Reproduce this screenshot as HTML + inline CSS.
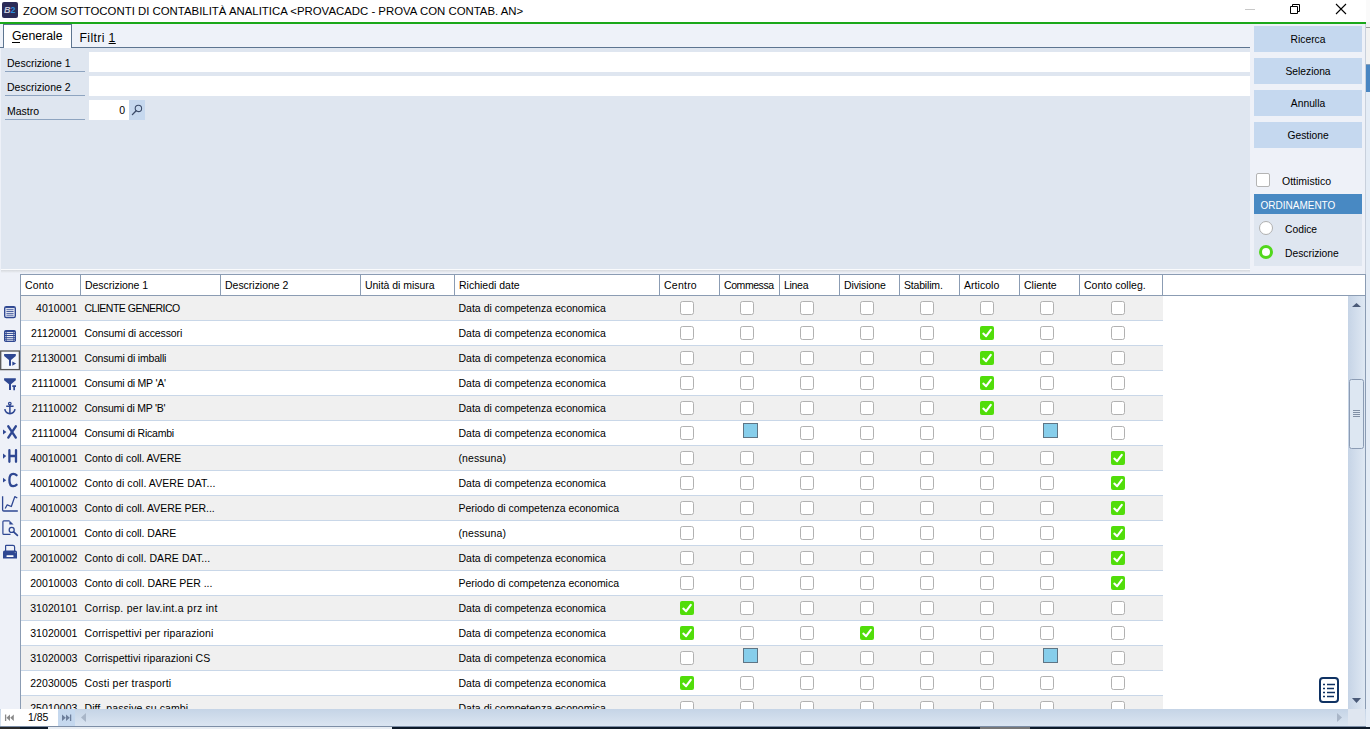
<!DOCTYPE html>
<html><head><meta charset="utf-8"><style>
*{box-sizing:border-box;margin:0;padding:0}
html,body{width:1370px;height:729px;overflow:hidden;background:#eef1f8;font-family:"Liberation Sans",sans-serif;color:#000}
.a{position:absolute}
.title{position:absolute;left:0;top:0;width:1366px;height:22px;background:#fff}
.green{position:absolute;left:0;top:22px;width:1366px;height:2px;background:#1aa81a}
.tabs{position:absolute;left:0;top:24px;width:1250px;height:24px;background:#eef2f9}
.form{position:absolute;left:1px;top:48px;width:1249px;height:221px;background:#dfe6f0}
.lbl{position:absolute;left:5px;width:80px;height:20px;border-bottom:1px solid #8ea4c0;font-size:10.5px;line-height:22px;padding-left:2px}
.inp{position:absolute;left:89px;height:20px;background:#fff}
.btn{position:absolute;left:1254px;width:108px;height:26px;background:#c5d8ef;font-size:10.3px;text-align:center;line-height:28px}
.gh{position:absolute;left:20px;top:274px;width:1346px;height:22px;background:#fff;border:1px solid #8b9cb3;border-right:1px solid #8b9cb3}
.hc{position:absolute;top:275px;height:20px;border-left:1px solid #8b9cb3;font-size:10.5px;line-height:20px;padding-left:4px;white-space:nowrap;overflow:hidden}
.row{position:absolute;left:21px;width:1142px;height:25px;border-bottom:1px solid #c9d7e8}
.cell{position:absolute;height:24px;line-height:24px;font-size:10.5px;white-space:nowrap}
.num{text-align:right}
.cb{position:absolute;width:14px;height:14px;border:1.5px solid #b1b1b1;border-radius:2.5px;background:#fff}
.ck{position:absolute;width:14px;height:14px}
.ck svg{display:block}
.bs{position:absolute;width:15px;height:15px;background:#87ceeb;border:1px solid #5f7585}
.ti{position:absolute;left:0}
</style></head><body>
<div class="title"></div>
<div class="a" style="left:1366px;top:0;width:4px;height:729px;background:#e4ecf6"></div>
<div class="a" style="left:1366px;top:0;width:4px;height:64px;background:#f2f2f2"></div>
<div class="a" style="left:1366px;top:0;width:4px;height:22px;background:#fafafa"></div>
<div class="a" style="left:1366px;top:27px;width:4px;height:1px;background:#9a9a9a"></div>
<div class="a" style="left:1366px;top:64px;width:4px;height:28px;background:#4a86c2;border-top:1px solid #8aa0b8"></div>
<div class="a" style="left:2px;top:2px;width:16px;height:16px;background:#2b2b57;border-radius:2px;font-size:9px;font-style:italic;font-weight:bold;line-height:16px;padding-left:2px;color:#c8c8d8">B<span style="color:#2a8ad8;font-style:normal">2</span></div>
<div class="a" style="left:23px;top:-0.5px;height:22px;line-height:22px;font-size:11.4px;white-space:nowrap;color:#000">ZOOM SOTTOCONTI DI CONTABILITÀ ANALITICA &lt;PROVACADC - PROVA CON CONTAB. AN&gt;</div>
<div class="a" style="left:1245px;top:9px;width:10px;height:1px;background:#c8c8c8"></div>
<svg class="a" style="left:1288px;top:3px" width="14" height="12" viewBox="0 0 14 12"><path d="M2.5 3.5H9.5V10.5H2.5Z" fill="none" stroke="#000" stroke-width="1"/><path d="M4.5 3.5V1.5H11.5V8.5H9.5" fill="none" stroke="#000" stroke-width="1"/></svg>
<svg class="a" style="left:1335px;top:3px" width="12" height="12" viewBox="0 0 12 12"><path d="M1 1L11 11M11 1L1 11" stroke="#000" stroke-width="1.1"/></svg>
<div class="green"></div>
<div class="tabs"></div>
<div class="a" style="left:0;top:47px;width:1250px;height:1px;background:#5d7590"></div>
<div class="a" style="left:3px;top:24px;width:69px;height:24px;background:#fff;border:1px solid #5d7590;border-bottom:none;font-size:12.3px;line-height:22px;padding-left:8px">Generale</div>
<div class="a" style="left:12px;top:42px;width:8px;height:1px;background:#000"></div>
<div class="a" style="left:79.5px;top:26.5px;height:21px;font-size:12.3px;line-height:23px;letter-spacing:0.35px">Filtri <span style="text-decoration:underline">1</span></div>
<div class="form"></div>
<div class="a" style="left:1px;top:269px;width:1249px;height:1px;background:#fafbfd"></div>
<div class="a" style="left:1px;top:270px;width:1249px;height:3px;background:linear-gradient(180deg,#d6d9de,#e4e7ec 60%,#eef1f8)"></div>
<div class="lbl" style="top:52px">Descrizione 1</div>
<div class="lbl" style="top:76px">Descrizione 2</div>
<div class="lbl" style="top:100px">Mastro</div>
<div class="inp" style="top:52px;width:1161px"></div>
<div class="inp" style="top:76px;width:1161px"></div>
<div class="inp" style="top:100px;width:40px;font-size:10.5px;line-height:20px;text-align:right;padding-right:4px">0</div>
<div class="a" style="left:129px;top:100px;width:16px;height:20px;background:#c6d8ee"></div>
<svg class="a" style="left:129px;top:100px" width="16" height="20" viewBox="0 0 16 20"><circle cx="9.4" cy="8.4" r="3.2" fill="none" stroke="#3a4a68" stroke-width="1.05"/><path d="M7.1 10.7L3.4 14.6" stroke="#3a4a68" stroke-width="1.35" stroke-linecap="round"/></svg>
<div class="btn" style="top:26px">Ricerca</div>
<div class="btn" style="top:58px">Seleziona</div>
<div class="btn" style="top:90px">Annulla</div>
<div class="btn" style="top:122px">Gestione</div>
<div class="a" style="left:1256px;top:173px;width:14px;height:14px;border:1px solid #b4b4b4;border-radius:2px;background:#fff"></div>
<div class="a" style="left:1282px;top:171px;height:20px;line-height:20px;font-size:10.5px">Ottimistico</div>
<div class="a" style="left:1254px;top:194px;width:108px;height:20px;background:#4889c3;color:#fff;font-size:10px;line-height:23px;padding-left:6.5px">ORDINAMENTO</div>
<div class="a" style="left:1254px;top:214px;width:108px;height:52px;background:#dfe6f0"></div>
<div class="a" style="left:1259px;top:221px;width:14px;height:14px;border-radius:50%;border:1px solid #b0b0b0;background:#fff"></div>
<div class="a" style="left:1285px;top:220px;height:20px;line-height:20px;font-size:10.3px">Codice</div>
<div class="a" style="left:1259px;top:245px;width:14px;height:14px;border-radius:50%;border:3.6px solid #52d81c;background:#fff"></div>
<div class="a" style="left:1285px;top:244px;height:20px;line-height:20px;font-size:10.3px">Descrizione</div>
<div class="a" style="left:1365px;top:24px;width:1px;height:250px;background:#c8d0dc"></div>
<div class="a" style="left:20px;top:296px;width:1328px;height:413px;background:#fff"></div>
<div class="a" style="left:20px;top:274px;width:1px;height:435px;background:#8b9cb3"></div>
<div class="gh"></div><div class="hc" style="left:20px;width:60px;letter-spacing:0.117px;">Conto</div><div class="hc" style="left:80px;width:140px;letter-spacing:-0.044px;">Descrizione 1</div><div class="hc" style="left:220px;width:140px;letter-spacing:-0.019px;">Descrizione 2</div><div class="hc" style="left:360px;width:94px;letter-spacing:-0.038px;">Unità di misura</div><div class="hc" style="left:454px;width:205px;letter-spacing:-0.000px;">Richiedi date</div><div class="hc" style="left:659px;width:60px;letter-spacing:0.237px;">Centro</div><div class="hc" style="left:719px;width:60px;letter-spacing:-0.430px;">Commessa</div><div class="hc" style="left:779px;width:60px;letter-spacing:-0.301px;">Linea</div><div class="hc" style="left:839px;width:60px;letter-spacing:-0.101px;">Divisione</div><div class="hc" style="left:899px;width:60px;letter-spacing:-0.183px;">Stabilim.</div><div class="hc" style="left:959px;width:60px;letter-spacing:0.041px;">Articolo</div><div class="hc" style="left:1019px;width:60px;letter-spacing:0.002px;">Cliente</div><div class="hc" style="left:1079px;width:83px;letter-spacing:0.034px;">Conto colleg.</div><div class="a" style="left:1162px;top:275px;width:1px;height:20px;background:#8b9cb3"></div><div class="row" style="top:296px;background:#f0f0f0"></div><div class="cell num" style="top:296px;left:20px;width:57.5px;letter-spacing:0.08px">4010001</div><div class="cell" style="top:296px;left:84.5px;letter-spacing:-0.505px;">CLIENTE GENERICO</div><div class="cell" style="top:296px;left:458.5px;letter-spacing:0.011px;">Data di competenza economica</div><div class="cb" style="top:301px;left:680px"></div><div class="cb" style="top:301px;left:740px"></div><div class="cb" style="top:301px;left:800px"></div><div class="cb" style="top:301px;left:860px"></div><div class="cb" style="top:301px;left:920px"></div><div class="cb" style="top:301px;left:980px"></div><div class="cb" style="top:301px;left:1040px"></div><div class="cb" style="top:301px;left:1111px"></div><div class="row" style="top:321px;background:#ffffff"></div><div class="cell num" style="top:321px;left:20px;width:57.5px;letter-spacing:0.08px">21120001</div><div class="cell" style="top:321px;left:84.5px;letter-spacing:-0.105px;">Consumi di accessori</div><div class="cell" style="top:321px;left:458.5px;letter-spacing:0.011px;">Data di competenza economica</div><div class="cb" style="top:326px;left:680px"></div><div class="cb" style="top:326px;left:740px"></div><div class="cb" style="top:326px;left:800px"></div><div class="cb" style="top:326px;left:860px"></div><div class="cb" style="top:326px;left:920px"></div><div class="ck" style="top:326px;left:980px"><svg width="14" height="14" viewBox="0 0 14 14"><rect x="0" y="0" width="14" height="14" rx="2" fill="#52dd0a"/><path d="M3.3 7.6 L6.1 10.2 L10.8 3.8" stroke="#fff" stroke-width="2.1" fill="none" stroke-linecap="round" stroke-linejoin="round"/></svg></div><div class="cb" style="top:326px;left:1040px"></div><div class="cb" style="top:326px;left:1111px"></div><div class="row" style="top:346px;background:#f0f0f0"></div><div class="cell num" style="top:346px;left:20px;width:57.5px;letter-spacing:0.08px">21130001</div><div class="cell" style="top:346px;left:84.5px;letter-spacing:-0.194px;">Consumi di imballi</div><div class="cell" style="top:346px;left:458.5px;letter-spacing:0.011px;">Data di competenza economica</div><div class="cb" style="top:351px;left:680px"></div><div class="cb" style="top:351px;left:740px"></div><div class="cb" style="top:351px;left:800px"></div><div class="cb" style="top:351px;left:860px"></div><div class="cb" style="top:351px;left:920px"></div><div class="ck" style="top:351px;left:980px"><svg width="14" height="14" viewBox="0 0 14 14"><rect x="0" y="0" width="14" height="14" rx="2" fill="#52dd0a"/><path d="M3.3 7.6 L6.1 10.2 L10.8 3.8" stroke="#fff" stroke-width="2.1" fill="none" stroke-linecap="round" stroke-linejoin="round"/></svg></div><div class="cb" style="top:351px;left:1040px"></div><div class="cb" style="top:351px;left:1111px"></div><div class="row" style="top:371px;background:#ffffff"></div><div class="cell num" style="top:371px;left:20px;width:57.5px;letter-spacing:0.08px">21110001</div><div class="cell" style="top:371px;left:84.5px;letter-spacing:-0.215px;">Consumi di MP 'A'</div><div class="cell" style="top:371px;left:458.5px;letter-spacing:0.011px;">Data di competenza economica</div><div class="cb" style="top:376px;left:680px"></div><div class="cb" style="top:376px;left:740px"></div><div class="cb" style="top:376px;left:800px"></div><div class="cb" style="top:376px;left:860px"></div><div class="cb" style="top:376px;left:920px"></div><div class="ck" style="top:376px;left:980px"><svg width="14" height="14" viewBox="0 0 14 14"><rect x="0" y="0" width="14" height="14" rx="2" fill="#52dd0a"/><path d="M3.3 7.6 L6.1 10.2 L10.8 3.8" stroke="#fff" stroke-width="2.1" fill="none" stroke-linecap="round" stroke-linejoin="round"/></svg></div><div class="cb" style="top:376px;left:1040px"></div><div class="cb" style="top:376px;left:1111px"></div><div class="row" style="top:396px;background:#f0f0f0"></div><div class="cell num" style="top:396px;left:20px;width:57.5px;letter-spacing:0.08px">21110002</div><div class="cell" style="top:396px;left:84.5px;letter-spacing:-0.252px;">Consumi di MP 'B'</div><div class="cell" style="top:396px;left:458.5px;letter-spacing:0.011px;">Data di competenza economica</div><div class="cb" style="top:401px;left:680px"></div><div class="cb" style="top:401px;left:740px"></div><div class="cb" style="top:401px;left:800px"></div><div class="cb" style="top:401px;left:860px"></div><div class="cb" style="top:401px;left:920px"></div><div class="ck" style="top:401px;left:980px"><svg width="14" height="14" viewBox="0 0 14 14"><rect x="0" y="0" width="14" height="14" rx="2" fill="#52dd0a"/><path d="M3.3 7.6 L6.1 10.2 L10.8 3.8" stroke="#fff" stroke-width="2.1" fill="none" stroke-linecap="round" stroke-linejoin="round"/></svg></div><div class="cb" style="top:401px;left:1040px"></div><div class="cb" style="top:401px;left:1111px"></div><div class="row" style="top:421px;background:#ffffff"></div><div class="cell num" style="top:421px;left:20px;width:57.5px;letter-spacing:0.08px">21110004</div><div class="cell" style="top:421px;left:84.5px;letter-spacing:-0.216px;">Consumi di Ricambi</div><div class="cell" style="top:421px;left:458.5px;letter-spacing:0.011px;">Data di competenza economica</div><div class="cb" style="top:426px;left:680px"></div><div class="bs" style="top:423px;left:743px"></div><div class="cb" style="top:426px;left:800px"></div><div class="cb" style="top:426px;left:860px"></div><div class="cb" style="top:426px;left:920px"></div><div class="cb" style="top:426px;left:980px"></div><div class="bs" style="top:423px;left:1043px"></div><div class="cb" style="top:426px;left:1111px"></div><div class="row" style="top:446px;background:#f0f0f0"></div><div class="cell num" style="top:446px;left:20px;width:57.5px;letter-spacing:0.08px">40010001</div><div class="cell" style="top:446px;left:84.5px;letter-spacing:-0.061px;">Conto di coll. AVERE</div><div class="cell" style="top:446px;left:458.5px;letter-spacing:0.087px;">(nessuna)</div><div class="cb" style="top:451px;left:680px"></div><div class="cb" style="top:451px;left:740px"></div><div class="cb" style="top:451px;left:800px"></div><div class="cb" style="top:451px;left:860px"></div><div class="cb" style="top:451px;left:920px"></div><div class="cb" style="top:451px;left:980px"></div><div class="cb" style="top:451px;left:1040px"></div><div class="ck" style="top:451px;left:1111px"><svg width="14" height="14" viewBox="0 0 14 14"><rect x="0" y="0" width="14" height="14" rx="2" fill="#52dd0a"/><path d="M3.3 7.6 L6.1 10.2 L10.8 3.8" stroke="#fff" stroke-width="2.1" fill="none" stroke-linecap="round" stroke-linejoin="round"/></svg></div><div class="row" style="top:471px;background:#ffffff"></div><div class="cell num" style="top:471px;left:20px;width:57.5px;letter-spacing:0.08px">40010002</div><div class="cell" style="top:471px;left:84.5px;letter-spacing:0.089px;">Conto di coll. AVERE DAT...</div><div class="cell" style="top:471px;left:458.5px;letter-spacing:0.011px;">Data di competenza economica</div><div class="cb" style="top:476px;left:680px"></div><div class="cb" style="top:476px;left:740px"></div><div class="cb" style="top:476px;left:800px"></div><div class="cb" style="top:476px;left:860px"></div><div class="cb" style="top:476px;left:920px"></div><div class="cb" style="top:476px;left:980px"></div><div class="cb" style="top:476px;left:1040px"></div><div class="ck" style="top:476px;left:1111px"><svg width="14" height="14" viewBox="0 0 14 14"><rect x="0" y="0" width="14" height="14" rx="2" fill="#52dd0a"/><path d="M3.3 7.6 L6.1 10.2 L10.8 3.8" stroke="#fff" stroke-width="2.1" fill="none" stroke-linecap="round" stroke-linejoin="round"/></svg></div><div class="row" style="top:496px;background:#f0f0f0"></div><div class="cell num" style="top:496px;left:20px;width:57.5px;letter-spacing:0.08px">40010003</div><div class="cell" style="top:496px;left:84.5px;letter-spacing:-0.032px;">Conto di coll. AVERE PER...</div><div class="cell" style="top:496px;left:458.5px;letter-spacing:-0.020px;">Periodo di competenza economica</div><div class="cb" style="top:501px;left:680px"></div><div class="cb" style="top:501px;left:740px"></div><div class="cb" style="top:501px;left:800px"></div><div class="cb" style="top:501px;left:860px"></div><div class="cb" style="top:501px;left:920px"></div><div class="cb" style="top:501px;left:980px"></div><div class="cb" style="top:501px;left:1040px"></div><div class="ck" style="top:501px;left:1111px"><svg width="14" height="14" viewBox="0 0 14 14"><rect x="0" y="0" width="14" height="14" rx="2" fill="#52dd0a"/><path d="M3.3 7.6 L6.1 10.2 L10.8 3.8" stroke="#fff" stroke-width="2.1" fill="none" stroke-linecap="round" stroke-linejoin="round"/></svg></div><div class="row" style="top:521px;background:#ffffff"></div><div class="cell num" style="top:521px;left:20px;width:57.5px;letter-spacing:0.08px">20010001</div><div class="cell" style="top:521px;left:84.5px;letter-spacing:-0.055px;">Conto di coll. DARE</div><div class="cell" style="top:521px;left:458.5px;letter-spacing:0.087px;">(nessuna)</div><div class="cb" style="top:526px;left:680px"></div><div class="cb" style="top:526px;left:740px"></div><div class="cb" style="top:526px;left:800px"></div><div class="cb" style="top:526px;left:860px"></div><div class="cb" style="top:526px;left:920px"></div><div class="cb" style="top:526px;left:980px"></div><div class="cb" style="top:526px;left:1040px"></div><div class="ck" style="top:526px;left:1111px"><svg width="14" height="14" viewBox="0 0 14 14"><rect x="0" y="0" width="14" height="14" rx="2" fill="#52dd0a"/><path d="M3.3 7.6 L6.1 10.2 L10.8 3.8" stroke="#fff" stroke-width="2.1" fill="none" stroke-linecap="round" stroke-linejoin="round"/></svg></div><div class="row" style="top:546px;background:#f0f0f0"></div><div class="cell num" style="top:546px;left:20px;width:57.5px;letter-spacing:0.08px">20010002</div><div class="cell" style="top:546px;left:84.5px;letter-spacing:0.087px;">Conto di coll. DARE DAT...</div><div class="cell" style="top:546px;left:458.5px;letter-spacing:0.011px;">Data di competenza economica</div><div class="cb" style="top:551px;left:680px"></div><div class="cb" style="top:551px;left:740px"></div><div class="cb" style="top:551px;left:800px"></div><div class="cb" style="top:551px;left:860px"></div><div class="cb" style="top:551px;left:920px"></div><div class="cb" style="top:551px;left:980px"></div><div class="cb" style="top:551px;left:1040px"></div><div class="ck" style="top:551px;left:1111px"><svg width="14" height="14" viewBox="0 0 14 14"><rect x="0" y="0" width="14" height="14" rx="2" fill="#52dd0a"/><path d="M3.3 7.6 L6.1 10.2 L10.8 3.8" stroke="#fff" stroke-width="2.1" fill="none" stroke-linecap="round" stroke-linejoin="round"/></svg></div><div class="row" style="top:571px;background:#ffffff"></div><div class="cell num" style="top:571px;left:20px;width:57.5px;letter-spacing:0.08px">20010003</div><div class="cell" style="top:571px;left:84.5px;letter-spacing:-0.045px;">Conto di coll. DARE PER ...</div><div class="cell" style="top:571px;left:458.5px;letter-spacing:-0.020px;">Periodo di competenza economica</div><div class="cb" style="top:576px;left:680px"></div><div class="cb" style="top:576px;left:740px"></div><div class="cb" style="top:576px;left:800px"></div><div class="cb" style="top:576px;left:860px"></div><div class="cb" style="top:576px;left:920px"></div><div class="cb" style="top:576px;left:980px"></div><div class="cb" style="top:576px;left:1040px"></div><div class="ck" style="top:576px;left:1111px"><svg width="14" height="14" viewBox="0 0 14 14"><rect x="0" y="0" width="14" height="14" rx="2" fill="#52dd0a"/><path d="M3.3 7.6 L6.1 10.2 L10.8 3.8" stroke="#fff" stroke-width="2.1" fill="none" stroke-linecap="round" stroke-linejoin="round"/></svg></div><div class="row" style="top:596px;background:#f0f0f0"></div><div class="cell num" style="top:596px;left:20px;width:57.5px;letter-spacing:0.08px">31020101</div><div class="cell" style="top:596px;left:84.5px;letter-spacing:0.283px;">Corrisp. per lav.int.a prz int</div><div class="cell" style="top:596px;left:458.5px;letter-spacing:0.011px;">Data di competenza economica</div><div class="ck" style="top:601px;left:680px"><svg width="14" height="14" viewBox="0 0 14 14"><rect x="0" y="0" width="14" height="14" rx="2" fill="#52dd0a"/><path d="M3.3 7.6 L6.1 10.2 L10.8 3.8" stroke="#fff" stroke-width="2.1" fill="none" stroke-linecap="round" stroke-linejoin="round"/></svg></div><div class="cb" style="top:601px;left:740px"></div><div class="cb" style="top:601px;left:800px"></div><div class="cb" style="top:601px;left:860px"></div><div class="cb" style="top:601px;left:920px"></div><div class="cb" style="top:601px;left:980px"></div><div class="cb" style="top:601px;left:1040px"></div><div class="cb" style="top:601px;left:1111px"></div><div class="row" style="top:621px;background:#ffffff"></div><div class="cell num" style="top:621px;left:20px;width:57.5px;letter-spacing:0.08px">31020001</div><div class="cell" style="top:621px;left:84.5px;letter-spacing:0.140px;">Corrispettivi per riparazioni</div><div class="cell" style="top:621px;left:458.5px;letter-spacing:0.011px;">Data di competenza economica</div><div class="ck" style="top:626px;left:680px"><svg width="14" height="14" viewBox="0 0 14 14"><rect x="0" y="0" width="14" height="14" rx="2" fill="#52dd0a"/><path d="M3.3 7.6 L6.1 10.2 L10.8 3.8" stroke="#fff" stroke-width="2.1" fill="none" stroke-linecap="round" stroke-linejoin="round"/></svg></div><div class="cb" style="top:626px;left:740px"></div><div class="cb" style="top:626px;left:800px"></div><div class="ck" style="top:626px;left:860px"><svg width="14" height="14" viewBox="0 0 14 14"><rect x="0" y="0" width="14" height="14" rx="2" fill="#52dd0a"/><path d="M3.3 7.6 L6.1 10.2 L10.8 3.8" stroke="#fff" stroke-width="2.1" fill="none" stroke-linecap="round" stroke-linejoin="round"/></svg></div><div class="cb" style="top:626px;left:920px"></div><div class="cb" style="top:626px;left:980px"></div><div class="cb" style="top:626px;left:1040px"></div><div class="cb" style="top:626px;left:1111px"></div><div class="row" style="top:646px;background:#f0f0f0"></div><div class="cell num" style="top:646px;left:20px;width:57.5px;letter-spacing:0.08px">31020003</div><div class="cell" style="top:646px;left:84.5px;letter-spacing:0.052px;">Corrispettivi riparazioni CS</div><div class="cell" style="top:646px;left:458.5px;letter-spacing:0.011px;">Data di competenza economica</div><div class="cb" style="top:651px;left:680px"></div><div class="bs" style="top:648px;left:743px"></div><div class="cb" style="top:651px;left:800px"></div><div class="cb" style="top:651px;left:860px"></div><div class="cb" style="top:651px;left:920px"></div><div class="cb" style="top:651px;left:980px"></div><div class="bs" style="top:648px;left:1043px"></div><div class="cb" style="top:651px;left:1111px"></div><div class="row" style="top:671px;background:#ffffff"></div><div class="cell num" style="top:671px;left:20px;width:57.5px;letter-spacing:0.08px">22030005</div><div class="cell" style="top:671px;left:84.5px;letter-spacing:0.213px;">Costi per trasporti</div><div class="cell" style="top:671px;left:458.5px;letter-spacing:0.011px;">Data di competenza economica</div><div class="ck" style="top:676px;left:680px"><svg width="14" height="14" viewBox="0 0 14 14"><rect x="0" y="0" width="14" height="14" rx="2" fill="#52dd0a"/><path d="M3.3 7.6 L6.1 10.2 L10.8 3.8" stroke="#fff" stroke-width="2.1" fill="none" stroke-linecap="round" stroke-linejoin="round"/></svg></div><div class="cb" style="top:676px;left:740px"></div><div class="cb" style="top:676px;left:800px"></div><div class="cb" style="top:676px;left:860px"></div><div class="cb" style="top:676px;left:920px"></div><div class="cb" style="top:676px;left:980px"></div><div class="cb" style="top:676px;left:1040px"></div><div class="cb" style="top:676px;left:1111px"></div><div class="row" style="top:696px;background:#f0f0f0"></div><div class="cell num" style="top:696px;left:20px;width:57.5px;letter-spacing:0.08px">25010003</div><div class="cell" style="top:696px;left:84.5px;letter-spacing:0.074px;">Diff. passive su cambi</div><div class="cell" style="top:696px;left:458.5px;letter-spacing:0.011px;">Data di competenza economica</div><div class="cb" style="top:701px;left:680px"></div><div class="cb" style="top:701px;left:740px"></div><div class="cb" style="top:701px;left:800px"></div><div class="cb" style="top:701px;left:860px"></div><div class="cb" style="top:701px;left:920px"></div><div class="cb" style="top:701px;left:980px"></div><div class="cb" style="top:701px;left:1040px"></div><div class="cb" style="top:701px;left:1111px"></div>

<div class="a" style="left:0;top:274px;width:20px;height:435px;background:#eef1f8"></div>
<svg class="a" style="left:0;top:296px" width="20" height="270" viewBox="0 296 20 270">
<rect x="4.7" y="306.7" width="10.6" height="10.8" rx="1.6" fill="none" stroke="#2e4792" stroke-width="1.4"/>
<path d="M5.5 307.6H14.5" stroke="#2e4792" stroke-width="1"/>
<path d="M6.4 309.7H13.6M6.4 311.5H13.6M6.4 313.4H13.6M6.4 315.2H13.6" stroke="#2e4792" stroke-width="0.85"/>
<rect x="4" y="330" width="12" height="12" rx="1.8" fill="#2e4792"/>
<path d="M6.6 332.6H13.4M6.6 334.5H13.4M6.6 336.5H13.4M6.6 338.3H13.4M6.6 340.2H13.4" stroke="#fff" stroke-width="0.9"/>
<path d="M5 332.6H5.6M5 334.5H5.6M5 336.5H5.6M5 338.3H5.6M5 340.2H5.6M14.4 332.6H15M14.4 334.5H15M14.4 336.5H15M14.4 338.3H15M14.4 340.2H15" stroke="#fff" stroke-width="0.9"/>
<rect x="0.7" y="351" width="18.7" height="18.6" fill="#f4f6fa" stroke="#555" stroke-width="1.3"/>
<path d="M4.1 354H15.8V356L11 360V365.7H9V360L4.1 356Z" fill="#2e4792"/>
<path d="M12.3 361.6L16.1 363.6L12.3 365.7Z" fill="#2e4792"/>
<path d="M4.1 378.3H15.8V380.3L11 384.3V390H9V384.3L4.1 380.3Z" fill="#2e4792"/>
<path d="M12.3 385.3H16V387H15V390.2H13.3V387H12.3Z" fill="#2e4792"/>
<circle cx="9.8" cy="403.6" r="1.3" fill="none" stroke="#2e4792" stroke-width="1.2"/>
<path d="M6.2 406.2H13.6M9.9 405V413.3" stroke="#2e4792" stroke-width="1.5"/>
<path d="M4.8 409.2Q5.6 413.6 9.9 413.6Q14.2 413.6 15 409.2" fill="none" stroke="#2e4792" stroke-width="1.6"/>
<path d="M3 429.4L6.4 432L3 434.6Z" fill="#2e4792"/>
<path d="M8.3 426.3L15.8 437.6M15.8 426.3L8.3 437.6" stroke="#2e4792" stroke-width="2.4" stroke-linecap="round"/>
<path d="M3 453.5L6.2 456.1L3 458.8Z" fill="#2e4792"/>
<path d="M9.4 450.2V461.8M16 450.2V461.8M9.4 456H16" stroke="#2e4792" stroke-width="2.3" stroke-linecap="round"/>
<path d="M3 477.8L6.2 480.2L3 482.6Z" fill="#2e4792"/>
<path d="M16.6 475.2Q15.4 473.8 13.2 473.8Q9.4 473.8 9.4 480Q9.4 486.2 13.2 486.2Q15.4 486.2 16.6 484.8" fill="none" stroke="#2e4792" stroke-width="2.3" stroke-linecap="round"/>
<path d="M2.6 496.2V509.8Q2.6 511 3.8 511H17.8" fill="none" stroke="#2e4792" stroke-width="1.3"/>
<path d="M5.2 508.5L7.2 504.8L11.3 506.5L14.8 496.6L17.3 498" fill="none" stroke="#2e4792" stroke-width="1.3" stroke-linejoin="round"/>
<path d="M9.5 520.8H3.8Q2.9 520.8 2.9 521.7V533.5Q2.9 534.4 3.8 534.4H10.5" fill="none" stroke="#2e4792" stroke-width="1.2"/>
<path d="M9.4 520.4L13.6 524.6H9.4Z" fill="#2e4792"/>
<circle cx="11.7" cy="529.9" r="2.5" fill="none" stroke="#2e4792" stroke-width="1.3"/>
<path d="M13.6 531.8L17.4 535.3" stroke="#2e4792" stroke-width="1.7" stroke-linecap="round"/>
<path d="M5.6 551V546Q5.6 545.3 6.3 545.3H13Q14.6 545.3 14.6 547V551" fill="none" stroke="#2e4792" stroke-width="1.2"/>
<path d="M4.6 550.6H15.4Q17 550.6 17 552.2V558.4H3V552.2Q3 550.6 4.6 550.6Z" fill="#2e4792"/>
<rect x="6.5" y="555.3" width="7" height="1.6" rx="0.5" fill="#fff"/>
<circle cx="15.2" cy="552.6" r="0.6" fill="#9ab"/>
</svg>

<div class="a" style="left:1348px;top:296px;width:17px;height:413px;background:linear-gradient(90deg,#c6d4e6,#dfe8f3)"></div>
<div class="a" style="left:1365px;top:274px;width:1px;height:453px;background:#8b9cb3"></div>
<svg class="a" style="left:1348px;top:296px" width="17" height="413" viewBox="0 0 17 413"><path d="M4 11H13L8.5 7Z" fill="#4a5a78"/><path d="M4 402H13L8.5 407Z" fill="#4a5a78"/><rect x="1.5" y="83.5" width="14" height="69" rx="2" fill="#dde7f2" stroke="#8c9cb4"/><path d="M5 114.5H12M5 116.5H12M5 118.5H12M5 120.5H12" stroke="#6a7a90" stroke-width="0.8"/></svg>
<svg class="a" style="left:1313px;top:675px" width="30" height="30" viewBox="0 0 30 30"><rect x="7" y="3" width="18" height="24" rx="3" fill="#fff" stroke="#0f3263" stroke-width="2"/><path d="M10 9.5h2M10 13.5h2M10 17.5h2M10 21.5h2" stroke="#0f3263" stroke-width="1.6"/><path d="M14 9.5h8M14 13.5h7M14 17.5h8M14 21.5h7" stroke="#0f3263" stroke-width="1.6"/></svg>
<div class="a" style="left:0;top:709px;width:1366px;height:18px;background:linear-gradient(180deg,#c5d4e6,#dce6f2)"></div>
<div class="a" style="left:0;top:726px;width:1366px;height:1px;background:#7d8ea6"></div>
<div class="a" style="left:1px;top:709px;width:57px;height:17px;background:#fff"></div>
<div class="a" style="left:58px;top:709px;width:17px;height:17px;background:#c5d8ee"></div>
<div class="a" style="left:1348px;top:709px;width:17px;height:17px;background:#dfe6f0"></div>
<div class="a" style="left:28px;top:709px;height:17px;line-height:17px;font-size:10.5px">1/85</div>
<svg class="a" style="left:0;top:709px" width="90" height="17" viewBox="0 0 90 17"><path d="M5.6 5.5V12" stroke="#8a8a8a" stroke-width="1.3"/><path d="M10 5.5L6.4 8.75L10 12ZM13.8 5.5L10.2 8.75L13.8 12Z" fill="#8a8a8a"/><path d="M62 5.5L65.8 8.75L62 12ZM66 5.5L69.8 8.75L66 12Z" fill="#6d7f9c"/><path d="M70.6 5.5V12" stroke="#6d7f9c" stroke-width="1.3"/><path d="M86 4L81 8.5L86 13Z" fill="#a9b6c8"/></svg>
<svg class="a" style="left:1330px;top:709px" width="17" height="17" viewBox="0 0 17 17"><path d="M7 4L12 8.5L7 13Z" fill="#a9b6c8"/></svg>
<div class="a" style="left:0;top:727px;width:1370px;height:2px;background:#0d1a2a"></div>
<div class="a" style="left:48px;top:727px;width:344px;height:2px;background:#e8edf3"></div>
<div class="a" style="left:0;top:727px;width:20px;height:2px;background:#2a2a2a"></div>
<div class="a" style="left:980px;top:727px;width:50px;height:2px;background:#777"></div>
</body></html>
